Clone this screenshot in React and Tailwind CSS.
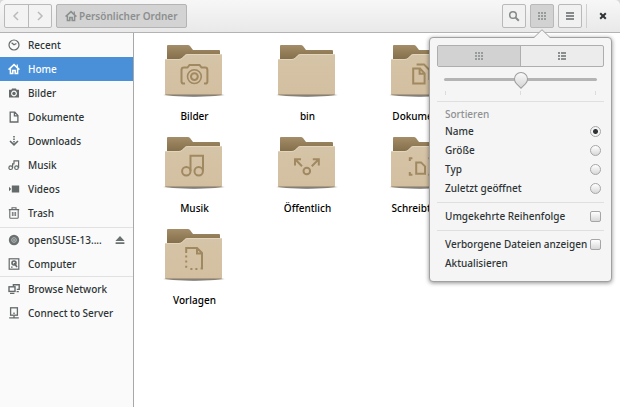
import React, { useState } from 'react';

const INK = '#646969';

// Sidebar icons share a 12x12 grid
const icons = {
  recent: (
    <g fill="none" stroke={INK} strokeWidth="1.2">
      <circle cx="6" cy="6" r="5" />
      <path d="M3.6 3.8 L6 5.8 L8.4 4.4" />
    </g>
  ),
  home: (
    <g fill="none" stroke="currentColor" strokeWidth="1.6">
      <path d="M0.6 6.6 L6 1.6 L11.4 6.6" />
      <path d="M2.4 5.6 V10.4 H4.8 V7.4 H7.2 V10.4 H9.6 V5.6" strokeWidth="1.5" />
      <path d="M9.3 1.4 V4" strokeWidth="1.2" />
    </g>
  ),
  camera: (
    <g>
      <path fill={INK} fillRule="evenodd" d="M1 2.8 H3.4 L4 1.6 H8 L8.6 2.8 H11 V10.4 H1 Z M6 3.6 a2.9 2.9 0 1 0 0.01 0 Z" />
      <circle cx="6" cy="6.5" r="1.7" fill={INK} />
    </g>
  ),
  document: (
    <path d="M2.2 1.2 H6.8 L9.9 4.4 V11 H2.2 Z M6.4 1.4 V4.8 H9.8" fill="none" stroke={INK} strokeWidth="1.3" />
  ),
  download: (
    <g fill="none" stroke={INK} strokeWidth="1.6">
      <path d="M2 6 L6 9.8 L10 6" />
      <path d="M6 1 V10" strokeDasharray="1.4 1.1" />
    </g>
  ),
  music: (
    <g fill="none" stroke={INK} strokeWidth="1.2">
      <circle cx="2.7" cy="8.7" r="1.8" />
      <circle cx="8.5" cy="8.7" r="1.8" />
      <path d="M4.6 9 V4.4 M6 4.6 V1.8 H10.6 V9 M4 4.8 H6.4" />
    </g>
  ),
  video: <path d="M3.8 2.6 H11.2 V9.4 H3.8 Z M1 3.8 L3.2 6 L1 8.2 Z" fill={INK} />,
  trash: (
    <g fill="none" stroke={INK} strokeWidth="1.1">
      <path d="M0.8 2.6 H11.2 M4 2.4 V0.8 H8 V2.4" />
      <path d="M1.8 2.8 V10.4 Q1.8 11.3 2.7 11.3 H9.3 Q10.2 11.3 10.2 10.4 V2.8" />
      <path d="M4.4 5 V9 M6 5 V9 M7.6 5 V9" strokeWidth="0.9" />
    </g>
  ),
  disc: (
    <g>
      <circle cx="6" cy="6" r="5.2" fill="#6b7070" />
      <circle cx="6" cy="6" r="2.3" fill="none" stroke="#b9bcbc" strokeWidth="1" />
      <circle cx="6" cy="6" r="0.8" fill="#d5d7d7" />
    </g>
  ),
  computer: (
    <g fill="none" stroke={INK} strokeWidth="1.2">
      <rect x="1.2" y="0.8" width="9.6" height="10.4" />
      <circle cx="6" cy="5" r="2" strokeWidth="1.6" />
      <path d="M6 5 L9 9" strokeWidth="1.6" />
      <path d="M3 9.2 H4.6" />
    </g>
  ),
  network: (
    <g fill="none" stroke={INK} strokeWidth="1.4">
      <path d="M5.4 3.4 V1.8 H11.2 V6.4 H8.8" />
      <rect x="1" y="3.8" width="6" height="4.6" />
      <path d="M2 10.4 H6.4 M8.6 8.6 H10.8" />
    </g>
  ),
  server: (
    <g fill="none" stroke={INK} strokeWidth="1.3">
      <rect x="2.6" y="0.8" width="6.8" height="7.4" />
      <path d="M6 8.4 V10.4 M1.2 10.8 H10.8" />
      <path d="M5 6.2 H7" strokeWidth="1" />
    </g>
  ),
};

const places = [
  [
    { id: 'recent', label: 'Recent', icon: 'recent' },
    { id: 'home', label: 'Home', icon: 'home' },
    { id: 'bilder', label: 'Bilder', icon: 'camera' },
    { id: 'dokumente', label: 'Dokumente', icon: 'document' },
    { id: 'downloads', label: 'Downloads', icon: 'download' },
    { id: 'musik', label: 'Musik', icon: 'music' },
    { id: 'videos', label: 'Videos', icon: 'video' },
    { id: 'trash', label: 'Trash', icon: 'trash' },
  ],
  [
    { id: 'suse', label: 'openSUSE-13....', icon: 'disc', eject: true },
    { id: 'computer', label: 'Computer', icon: 'computer' },
  ],
  [
    { id: 'network', label: 'Browse Network', icon: 'network' },
    { id: 'server', label: 'Connect to Server', icon: 'server' },
  ],
];

// Emblems engraved on the folder front, in the folder's own grid
const emblems = {
  camera: (
    <>
      <path d="M23 39.6 H21.5 Q19.5 39.6 19.5 37.5 V26 Q19.5 23.6 22 23.6 H25.5 L27.5 21 H37.5 L39.5 23.6 H43 Q45.4 23.6 45.4 26 V37.5 Q45.4 39.6 43.4 39.6 H42" />
      <circle cx="32.4" cy="32.6" r="6.9" strokeWidth="1.6" />
      <circle cx="32.4" cy="32.6" r="3.4" />
    </>
  ),
  documents: (
    <>
      <path d="M25.2 24.6 H32 L36.6 29.4 V39.6 H25.2 Z M31.6 25 V29.8 H36.4" />
      <path d="M28.6 20.4 H36 L41.4 26 V36" />
    </>
  ),
  music: (
    <>
      <circle cx="24.3" cy="35.2" r="4.2" />
      <circle cx="36.7" cy="35.2" r="4.2" />
      <path d="M28.5 35 V19.8 H41 V35" />
    </>
  ),
  share: (
    <>
      <circle cx="31.8" cy="35" r="3.3" />
      <path d="M20 29.5 V23.2 H26 M20.6 23.8 L27 30.2" />
      <path d="M43.8 29.5 V23.2 H37.8 M43.2 23.8 L36.8 30.2" />
    </>
  ),
  desktop: (
    <>
      <path d="M28.2 26.4 H33 L37 30.4 V37.8 H28.2 Z" />
      <path d="M21.8 25 V22.2 H24.4 M21.8 36 V38.8 H24.4" />
      <path d="M43 25 V22.2 H40.4 M43 36 V38.8 H40.4" />
    </>
  ),
  template: (
    <>
      <path d="M24.2 25 V20 H35 L40 25 V40.6 H38.6 M35 20 V25.4 H40" />
      <path d="M24.2 27.4 V42" strokeDasharray="2 3.2" />
      <path d="M28.4 41 H38" strokeDasharray="2 3" />
    </>
  ),
};

const folders = [
  { name: 'Bilder', emblem: 'camera' },
  { name: 'bin' },
  { name: 'Dokumente', emblem: 'documents' },
  { name: 'Musik', emblem: 'music' },
  { name: 'Öffentlich', emblem: 'share' },
  { name: 'Schreibtisch', emblem: 'desktop' },
  { name: 'Vorlagen', emblem: 'template' },
];

const sortModes = ['Name', 'Größe', 'Typ', 'Zuletzt geöffnet'];

const PlaceIcon = ({ name }) => (
  <svg viewBox="0 0 12 12" className="w-3 h-3 shrink-0" aria-hidden="true">
    {icons[name]}
  </svg>
);

const GridGlyph = () => (
  <svg viewBox="0 0 8 8" className="w-2 h-2" fill="#989b9c" aria-hidden="true">
    {[0, 3, 6].map((y) => [0, 3, 6].map((x) => <rect key={`${x}${y}`} x={x} y={y} width="2" height="2" />))}
  </svg>
);

const FolderIcon = ({ emblem }) => (
  <svg viewBox="1 0 63 56" className="w-[63px] h-14" aria-hidden="true">
    <defs>
      <linearGradient id="folderBack" x1="0" y1="0" x2="0" y2="1">
        <stop offset="0" stopColor="#a48d68" />
        <stop offset="1" stopColor="#806b48" />
      </linearGradient>
      <linearGradient id="folderFront" x1="0" y1="0" x2="0" y2="1">
        <stop offset="0" stopColor="#d6c4a8" />
        <stop offset="1" stopColor="#d3bfa0" />
      </linearGradient>
      <radialGradient id="folderShadow">
        <stop offset="0.7" stopColor="#000" stopOpacity="0.5" />
        <stop offset="1" stopColor="#000" stopOpacity="0" />
      </radialGradient>
    </defs>
    <ellipse cx="32" cy="51" rx="32" ry="2" fill="url(#folderShadow)" />
    <path d="M5 17 V2 Q5 1 6 1 H26 Q27 1 28 2 L31 6 H57 Q58 6 58 7 V17 Z" fill="url(#folderBack)" />
    <path
      d="M3 51 V16 Q3 15 4 15 H17 Q19 15 20 14 L23 11 Q24 10 26 10 H59 Q60 10 60 11 V50 Q60 51 59 51 Z"
      fill="url(#folderFront)"
    />
    <path d="M3.5 15.5 H17 Q19 15.5 20.4 14.2 L23 11.5 Q24 10.5 26 10.5 H59.5" fill="none" stroke="#e3d5bc" />
    <path d="M3.5 50.5 H59.5" stroke="#b09b78" />
    {emblem && (
      <g fill="none" stroke="#a08860" strokeWidth="2">
        {emblems[emblem]}
      </g>
    )}
  </svg>
);

const Sidebar = ({ active, onSelect }) => (
  <nav className="w-[134px] shrink-0 bg-[#fafafa] border-r border-[#a8a8a8]">
    {places.map((group, i) => (
      <ul key={i} className="first:pb-0.5 not-first:border-t border-[#e1e1e1]">
        {group.map((place) => (
          <li
            key={place.id}
            className={`flex items-center h-6 pr-2 ${active === place.id ? 'bg-[#4a90d9] text-white' : 'text-[#2e3436]'}`}
          >
            <button className="flex flex-1 items-center gap-2 h-full pl-2 text-left" onClick={() => onSelect(place.id)}>
              <PlaceIcon name={place.icon} />
              <span className="whitespace-nowrap">{place.label}</span>
            </button>
            {place.eject && (
              <button aria-label="Auswerfen">
                <svg viewBox="0 0 10 10" className="w-2.5 h-2.5" fill="#6b7070" aria-hidden="true">
                  <path d="M5 1 L9.6 6 H0.4 Z M0.6 7.2 H9.4 V9 H0.6 Z" />
                </svg>
              </button>
            )}
          </li>
        ))}
      </ul>
    ))}
  </nav>
);

const CHECK =
  'appearance-none shrink-0 w-[11px] h-[11px] border border-[#a6a6a6] bg-linear-to-b from-white to-[#d8d8d8]';

const ViewPopover = () => {
  const [sort, setSort] = useState('Name');
  const [zoom, setZoom] = useState(50);

  return (
    <div className="absolute top-[37px] right-2 z-10 w-[183px] px-[7px] pt-[7px] pb-2 rounded-[4px] border border-[#a1a1a1] bg-[#f5f5f5] shadow-[0_1px_4px_rgba(0,0,0,0.45)]">
      <svg viewBox="0 0 16 9" className="absolute -top-[9px] right-[61px] w-4 h-[9px]" aria-hidden="true">
        <path d="M0 8.5 L8 0.5 L16 8.5 V9 H0 Z" fill="#f5f5f5" />
        <path d="M0 8.5 L8 0.7 L16 8.5" fill="none" stroke="#a1a1a1" />
      </svg>

      <div className="flex h-[22px] rounded-[2px] border border-[#aeaeae] bg-[#ececec]">
        <button aria-label="Symbolansicht" className="flex flex-1 items-center justify-center bg-[#d2d2d2] border-r border-[#aeaeae]">
          <GridGlyph />
        </button>
        <button aria-label="Listenansicht" className="flex flex-1 items-center justify-center">
          <svg viewBox="0 0 8 8" className="w-2 h-2" fill="#8b8e8f" aria-hidden="true">
            <path d="M0 0h2v2H0zM3 0h5v2H3zM0 3h2v2H0zM3 3h5v2H3zM0 6h2v2H0zM3 6h5v2H3z" />
          </svg>
        </button>
      </div>

      <div className="px-[7px] pt-1">
        <input
          type="range"
          aria-label="Vergrößerung"
          value={zoom}
          onChange={(e) => setZoom(Number(e.target.value))}
          className="block w-full h-4 appearance-none bg-transparent [&::-webkit-slider-runnable-track]:h-[3px] [&::-webkit-slider-runnable-track]:rounded-full [&::-webkit-slider-runnable-track]:bg-[#b4b4b4] [&::-webkit-slider-thumb]:appearance-none [&::-webkit-slider-thumb]:w-3.5 [&::-webkit-slider-thumb]:h-3.5 [&::-webkit-slider-thumb]:-mt-1.5 [&::-webkit-slider-thumb]:rotate-45 [&::-webkit-slider-thumb]:rounded-full [&::-webkit-slider-thumb]:rounded-br-none [&::-webkit-slider-thumb]:border [&::-webkit-slider-thumb]:border-[#9d9d9d] [&::-webkit-slider-thumb]:bg-linear-to-br [&::-webkit-slider-thumb]:from-white [&::-webkit-slider-thumb]:to-[#d6d6d6]"
        />
        <div className="flex justify-between h-1 mt-1 px-px">
          <span className="w-px bg-[#dcdcdc]" />
          <span className="w-px bg-[#dcdcdc]" />
          <span className="w-px bg-[#dcdcdc]" />
        </div>
      </div>

      <hr className="mt-1.5 mb-1 border-[#dfdfdf]" />

      <fieldset className="pl-2 pr-[3px]">
        <legend className="h-4 leading-4 text-[#8f9192]">Sortieren</legend>
        {sortModes.map((mode) => (
          <label key={mode} className="flex items-center justify-between h-[19px]">
            {mode}
            <input
              type="radio"
              name="sort"
              checked={sort === mode}
              onChange={() => setSort(mode)}
              className={`${CHECK} rounded-full checked:bg-[radial-gradient(circle,#2e3436_1px,#2e3436_2px,#f4f4f4_3px)]`}
            />
          </label>
        ))}
      </fieldset>

      <hr className="my-1 border-[#dfdfdf]" />
      <label className="flex items-center justify-between h-[19px] pl-2 pr-[3px]">
        Umgekehrte Reihenfolge
        <input type="checkbox" className={`${CHECK} rounded-[2px]`} />
      </label>

      <hr className="my-1 border-[#dfdfdf]" />
      <label className="flex items-center justify-between h-[19px] pl-2 pr-[3px] whitespace-nowrap">
        Verborgene Dateien anzeigen
        <input type="checkbox" className={`${CHECK} rounded-[2px]`} />
      </label>
      <button className="block w-full h-[19px] pl-2 text-left">Aktualisieren</button>
    </div>
  );
};

const BTN = 'flex items-center justify-center w-6 h-6 rounded-[2px] border border-[#b9b9b9]';

const HeaderBar = () => (
  <header className="relative flex items-center h-[33px] pl-1 pr-[5px] border-b border-[#b3b3b3] rounded-t-[5px] bg-linear-to-b from-[#f7f7f7] to-[#e9e9e9]">
    <div className="flex w-12 h-6 rounded-[2px] border border-[#b9b9b9] bg-[#f3f3f3]">
      <button aria-label="Zurück" className="flex flex-1 items-center justify-center border-r border-[#b9b9b9]">
        <svg viewBox="0 0 10 10" className="w-2.5 h-2.5" fill="none" stroke="#b9bbbb" strokeWidth="1.5" aria-hidden="true">
          <path d="M7 1 L3 5 L7 9" />
        </svg>
      </button>
      <button aria-label="Vor" className="flex flex-1 items-center justify-center">
        <svg viewBox="0 0 10 10" className="w-2.5 h-2.5" fill="none" stroke="#b9bbbb" strokeWidth="1.5" aria-hidden="true">
          <path d="M3 1 L7 5 L3 9" />
        </svg>
      </button>
    </div>

    <button className="flex items-center gap-0.5 h-6 ml-1 px-2 rounded-[2px] border border-[#b4b4b4] bg-[#d3d3d3] text-[#8c8f8f] font-semibold whitespace-nowrap">
      <PlaceIcon name="home" />
      Persönlicher Ordner
    </button>

    <div className="flex items-center gap-1 ml-auto">
      <button aria-label="Suchen" className={`${BTN} bg-[#f1f1f1]`}>
        <svg viewBox="0 0 12 12" className="w-3 h-3" fill="none" stroke="#85898a" aria-hidden="true">
          <circle cx="5" cy="5" r="3.3" strokeWidth="1.5" />
          <path d="M7.4 7.4 L10.8 10.8" strokeWidth="2" />
        </svg>
      </button>
      <button aria-label="Ansicht" className={`${BTN} bg-[#d2d2d2]`}>
        <GridGlyph />
      </button>
      <button aria-label="Menü" className={`${BTN} bg-[#f1f1f1]`}>
        <svg viewBox="0 0 8 8" className="w-2 h-2" fill="#85898a" aria-hidden="true">
          <path d="M0 0h8v2H0zM0 3h8v2H0zM0 6h8v2H0z" />
        </svg>
      </button>
      <span className="w-px h-6 bg-[#cfcfcf]" />
      <button aria-label="Schließen" className="flex items-center justify-center w-6 h-6">
        <svg viewBox="0 0 8 8" className="w-2 h-2" stroke="#2e3436" strokeWidth="2" aria-hidden="true">
          <path d="M1.2 1.2 L6.8 6.8 M6.8 1.2 L1.2 6.8" />
        </svg>
      </button>
    </div>
    <ViewPopover />
  </header>
);

export default function App() {
  const [active, setActive] = useState('home');

  return (
    <div className="flex flex-col min-h-screen bg-[#d9d9d9] font-['Noto_Sans',sans-serif] text-[10px] font-medium text-[#2e3436]">
      <HeaderBar />
      <div className="flex flex-1 bg-white">
        <Sidebar active={active} onSelect={setActive} />
        <main className="flex-1 pt-[11px] pl-1">
          <ul className="grid grid-cols-[repeat(3,113px)] gap-y-3">
            {folders.map((folder) => (
              <li key={folder.name} className="flex flex-col items-center gap-2 text-black">
                <FolderIcon emblem={folder.emblem} />
                <span className="h-4 leading-4">{folder.name}</span>
              </li>
            ))}
          </ul>
        </main>
      </div>
    </div>
  );
}
